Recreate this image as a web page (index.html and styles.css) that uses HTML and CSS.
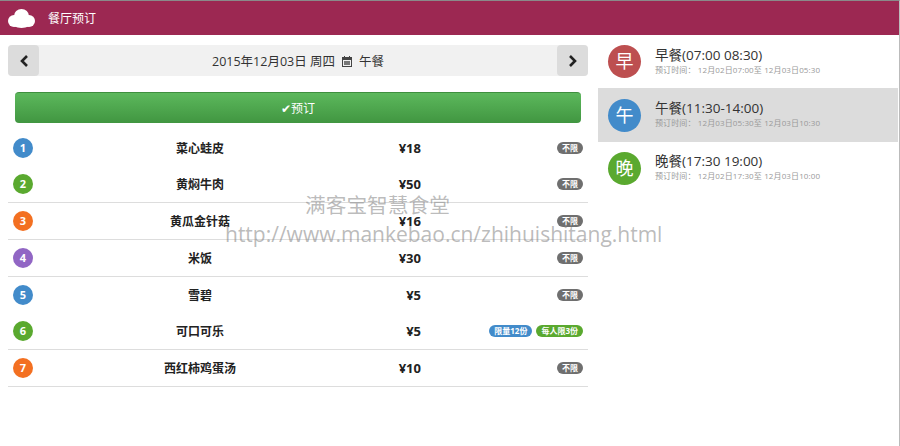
FILE: index.html
```html
<!DOCTYPE html>
<html lang="en">
<head>
    <meta charset="UTF-8">
    <meta name="viewport" content="width=device-width, initial-scale=1.0">
    <title>餐厅预订</title>
    <link rel="stylesheet" href="styles.css">
</head>
<body>

    <div class="page">
        <!-- Header -->
        <div class="top-bar">
            <svg class="logo" width="27" height="19" viewBox="0 0 27 19">
                <ellipse cx="13.5" cy="7" rx="7.5" ry="7" fill="#fff"/>
                <ellipse cx="6" cy="12" rx="6" ry="6" fill="#fff"/>
                <ellipse cx="21" cy="12" rx="6" ry="6" fill="#fff"/>
                <ellipse cx="13.5" cy="14" rx="10" ry="5" fill="#fff"/>
            </svg>
            <span class="top-title">餐厅预订</span>
        </div>

        <div class="content">
            <!-- Order column -->
            <div class="order-col">
                <div class="date-bar">
                    <div class="date-btn">
                        <svg width="10" height="12" viewBox="0 0 10 12"><path fill="none" stroke="#222" stroke-width="2.6" d="M8 1 3 6l5 5"/></svg>
                    </div>
                    <div class="date-text">
                        <span>2015年12月03日 周四</span>
                        <svg class="cal" width="12" height="12" viewBox="0 0 12 12">
                            <path fill="#444" d="M1 2h2V1h1v1h4V1h1v1h2v10H1zm1 3v6h8V5z"/>
                            <path fill="#777" d="M3 6h6v4H3z"/>
                        </svg>
                        <span>午餐</span>
                    </div>
                    <div class="date-btn">
                        <svg width="10" height="12" viewBox="0 0 10 12"><path fill="none" stroke="#222" stroke-width="2.6" d="m2 1 5 5-5 5"/></svg>
                    </div>
                </div>

                <div class="order-btn">✔预订</div>

                <div class="menu-list">
                    <div class="menu-row no-line">
                        <span class="num blue">1</span>
                        <span class="dish">菜心蛙皮</span>
                        <span class="price">¥18</span>
                        <span class="tags"><span class="tag grey">不限</span></span>
                    </div>
                    <div class="menu-row">
                        <span class="num green">2</span>
                        <span class="dish">黄焖牛肉</span>
                        <span class="price">¥50</span>
                        <span class="tags"><span class="tag grey">不限</span></span>
                    </div>
                    <div class="menu-row">
                        <span class="num orange">3</span>
                        <span class="dish">黄瓜金针菇</span>
                        <span class="price">¥16</span>
                        <span class="tags"><span class="tag grey">不限</span></span>
                    </div>
                    <div class="menu-row">
                        <span class="num purple">4</span>
                        <span class="dish">米饭</span>
                        <span class="price">¥30</span>
                        <span class="tags"><span class="tag grey">不限</span></span>
                    </div>
                    <div class="menu-row no-line">
                        <span class="num blue">5</span>
                        <span class="dish">雪碧</span>
                        <span class="price">¥5</span>
                        <span class="tags"><span class="tag grey">不限</span></span>
                    </div>
                    <div class="menu-row">
                        <span class="num green">6</span>
                        <span class="dish">可口可乐</span>
                        <span class="price">¥5</span>
                        <span class="tags">
                            <span class="tag blue">限量12份</span>
                            <span class="tag green">每人限3份</span>
                        </span>
                    </div>
                    <div class="menu-row">
                        <span class="num orange">7</span>
                        <span class="dish">西红柿鸡蛋汤</span>
                        <span class="price">¥10</span>
                        <span class="tags"><span class="tag grey">不限</span></span>
                    </div>
                </div>
            </div>

            <!-- Meal column -->
            <div class="meal-col">
                <div class="meal">
                    <span class="meal-icon red">早</span>
                    <div>
                        <div class="meal-name">早餐(07:00 08:30)</div>
                        <div class="meal-time">预订时间： 12月02日07:00至 12月03日05:30</div>
                    </div>
                </div>
                <div class="meal active">
                    <span class="meal-icon blue">午</span>
                    <div>
                        <div class="meal-name">午餐(11:30-14:00)</div>
                        <div class="meal-time">预订时间： 12月03日05:30至 12月03日10:30</div>
                    </div>
                </div>
                <div class="meal">
                    <span class="meal-icon green">晚</span>
                    <div>
                        <div class="meal-name">晚餐(17:30 19:00)</div>
                        <div class="meal-time">预订时间： 12月02日17:30至 12月03日10:00</div>
                    </div>
                </div>
            </div>
        </div>

        <!-- Watermark -->
        <div class="watermark">
            <div class="wm-name">满客宝智慧食堂</div>
            <div class="wm-url">http://www.mankebao.cn/zhihuishitang.html</div>
        </div>
    </div>

</body>
</html>
```

FILE: styles.css
```css
body {
    font-family: "Open Sans", "Noto Sans CJK SC", sans-serif;
    background-color: white;
    color: #222;
    margin: 0;
    padding: 0;
}

.page {
    position: relative;
    width: 899px;
    height: 445px;
    border-top: 1px solid #8a8a8a;
    border-right: 1px solid #bbb;
    overflow: hidden;
}

.top-bar {
    display: flex;
    align-items: center;
    height: 34px;
    padding-left: 8px;
    background-color: #9c2852;
}

.top-title {
    margin-left: 13px;
    color: white;
    font-size: 12px;
}

.content {
    display: flex;
}

.order-col {
    width: 580px;
    margin-left: 8px;
    padding-top: 10px;
}

.date-bar {
    display: flex;
    height: 31px;
    background-color: #f1f1f1;
    border-radius: 4px;
}

.date-btn {
    display: flex;
    align-items: center;
    justify-content: center;
    width: 31px;
    background-color: #dcdcdc;
    border-radius: 4px;
}

.date-text {
    flex: 1;
    display: flex;
    align-items: center;
    justify-content: center;
    gap: 6px;
    font-size: 12.5px;
    color: #333;
}

.order-btn {
    margin: 16px 7px 7px;
    height: 31px;
    line-height: 31px;
    box-sizing: border-box;
    border-top: 1px solid #3e8f3e;
    border-radius: 4px;
    background: linear-gradient(#5cb85c, #419641);
    color: white;
    font-size: 12px;
    text-align: center;
}

.menu-row {
    display: grid;
    grid-template-columns: 36px 312px 65px 1fr;
    align-items: center;
    height: 36.67px;
    box-sizing: border-box;
    border-bottom: 1px solid #ddd;
}

.menu-row.no-line {
    border-bottom: none;
}

.num {
    display: block;
    width: 20px;
    height: 20px;
    margin-left: 5px;
    border-radius: 50%;
    color: white;
    font-size: 11px;
    font-weight: bold;
    line-height: 20px;
    text-align: center;
}

.dish {
    font-size: 12px;
    font-weight: bold;
    text-align: center;
}

.price {
    font-size: 13px;
    font-weight: bold;
    text-align: right;
}

.tags {
    display: flex;
    justify-content: flex-end;
    gap: 4px;
    padding-right: 5px;
}

.tag {
    padding: 0 5px;
    height: 12px;
    line-height: 12px;
    border-radius: 6px;
    color: white;
    font-size: 8px;
    font-weight: bold;
}

.blue { background-color: #428bca; }
.green { background-color: #5aa92f; }
.orange { background-color: #f37021; }
.purple { background-color: #9166c4; }
.grey { background-color: #6f6f6f; }
.red { background-color: #bd4f50; }

.meal-col {
    width: 300px;
    margin-left: 10px;
}

.meal {
    display: flex;
    align-items: center;
    gap: 14px;
    height: 53.4px;
    padding-left: 10px;
}

.meal.active {
    background-color: #dcdcdc;
}

.meal-icon {
    flex-shrink: 0;
    width: 33px;
    height: 33px;
    border-radius: 50%;
    color: white;
    font-size: 18px;
    line-height: 33px;
    text-align: center;
}

.meal-name {
    margin-top: -2px;
    font-size: 13.5px;
    line-height: 17px;
    color: #333;
}

.meal-time {
    font-size: 8px;
    line-height: 11px;
    letter-spacing: 0.12px;
    color: #999;
}

.watermark {
    position: absolute;
    left: 225px;
    top: 190px;
    width: 439px;
    color: rgba(130, 130, 130, 0.55);
    pointer-events: none;
}

.wm-name {
    margin-left: 80px;
    font-size: 20.7px;
    line-height: 29px;
}

.wm-url {
    font-size: 21px;
    line-height: 28px;
    white-space: nowrap;
}
```
